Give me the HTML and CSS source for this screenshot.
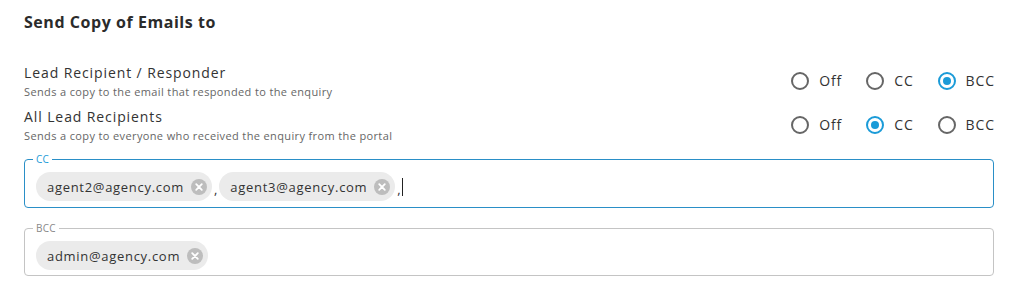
FILE: index.html
```html
<!DOCTYPE html>
<html>
<head>
<meta charset="utf-8">
<link rel="stylesheet" href="styles.css">
</head>
<body>
<div class="page">
  <h2 class="title">Send Copy of Emails to</h2>

  <div class="rows">
    <div class="row">
      <div class="info">
        <div class="label">Lead Recipient / Responder</div>
        <div class="desc">Sends a copy to the email that responded to the enquiry</div>
      </div>
      <div class="radios">
        <label class="radio"><span class="dot"></span>Off</label>
        <label class="radio"><span class="dot"></span>CC</label>
        <label class="radio"><span class="dot on"></span>BCC</label>
      </div>
    </div>
    <div class="row">
      <div class="info">
        <div class="label">All Lead Recipients</div>
        <div class="desc">Sends a copy to everyone who received the enquiry from the portal</div>
      </div>
      <div class="radios">
        <label class="radio"><span class="dot"></span>Off</label>
        <label class="radio"><span class="dot on"></span>CC</label>
        <label class="radio"><span class="dot"></span>BCC</label>
      </div>
    </div>
  </div>

  <fieldset class="field focused">
    <legend>CC</legend>
    <div class="chips">
      <span class="chip">agent2@agency.com<span class="x"><svg viewBox="0 0 16 16" width="16" height="16"><circle cx="8" cy="8" r="8" fill="#bdbdbd"/><path d="M5.2 5.2 L10.8 10.8 M10.8 5.2 L5.2 10.8" stroke="#fff" stroke-width="1.8" stroke-linecap="round"/></svg></span></span><span class="sep">,</span>
      <span class="chip">agent3@agency.com<span class="x"><svg viewBox="0 0 16 16" width="16" height="16"><circle cx="8" cy="8" r="8" fill="#bdbdbd"/><path d="M5.2 5.2 L10.8 10.8 M10.8 5.2 L5.2 10.8" stroke="#fff" stroke-width="1.8" stroke-linecap="round"/></svg></span></span><span class="sep last">,</span><span class="caret"></span>
    </div>
  </fieldset>

  <fieldset class="field">
    <legend>BCC</legend>
    <div class="chips">
      <span class="chip">admin@agency.com<span class="x"><svg viewBox="0 0 16 16" width="16" height="16"><circle cx="8" cy="8" r="8" fill="#bdbdbd"/><path d="M5.2 5.2 L10.8 10.8 M10.8 5.2 L5.2 10.8" stroke="#fff" stroke-width="1.8" stroke-linecap="round"/></svg></span></span>
    </div>
  </fieldset>
</div>
</body>
</html>
```
FILE: styles.css
```css
* { box-sizing: border-box; }
html, body { margin: 0; padding: 0; background: #fff; }
body {
  font-family: "Open Sans", "DejaVu Sans", sans-serif;
  color: #333;
}
.page {
  padding: 12px 20px 0 24px;
}
.title {
  margin: 0;
  font-size: 16px;
  line-height: 20px;
  font-weight: 700;
  color: #2b2b2b;
  letter-spacing: 0.55px;
}
.rows {
  margin-top: 30px;
  display: flex;
  flex-direction: column;
  gap: 6px;
}
.row {
  display: flex;
  justify-content: space-between;
  align-items: center;
}
.label {
  font-size: 14px;
  line-height: 21px;
  color: #333;
  letter-spacing: 0.9px;
}
.desc {
  font-size: 11px;
  line-height: 17px;
  color: #666;
  letter-spacing: 0.37px;
}
.radios {
  display: flex;
  gap: 24px;
  margin-right: -1px;
  margin-top: -1px;
}
.radio {
  display: flex;
  align-items: center;
  gap: 10px;
  font-size: 14px;
  color: #333;
  letter-spacing: 0.9px;
}
.dot {
  width: 18px;
  height: 18px;
  border-radius: 50%;
  border: 2px solid #666;
  display: flex;
  align-items: center;
  justify-content: center;
}
.dot.on {
  border-color: #1b9bd8;
}
.dot.on::after {
  content: "";
  width: 8px;
  height: 8px;
  border-radius: 50%;
  background: #1b9bd8;
}
.field {
  margin: 9px 0 0 0;
  border: 1px solid #c4c4c4;
  border-radius: 4px;
  padding: 0 11px 6px 11px;
  min-width: 0;
}
.field + .field {
  margin-top: 14px;
  padding-bottom: 5px;
}
.field legend {
  font-size: 10px;
  line-height: 12px;
  color: #888;
  padding: 0 3px;
  margin-left: -3px;
  letter-spacing: 0.3px;
}
.field.focused {
  border-color: #2a8fc7;
}
.field.focused legend {
  color: #1b9bd8;
}
.chips {
  display: flex;
  align-items: center;
  padding-top: 7px;
  min-height: 36px;
}
.chip {
  display: inline-flex;
  align-items: center;
  height: 29px;
  border-radius: 15px;
  background: #ebebeb;
  padding: 0 5px 0 11px;
  font-size: 13px;
  color: #333;
  letter-spacing: 0.7px;
}
.x {
  display: inline-flex;
  margin-left: 7px;
}
.sep {
  font-size: 13px;
  color: #333;
  margin: 4px 2px 0 2px;
  align-self: center;
}
.sep.last {
  margin-right: 1px;
}
.caret {
  display: inline-block;
  width: 1px;
  height: 18px;
  background: #222;
}
```
